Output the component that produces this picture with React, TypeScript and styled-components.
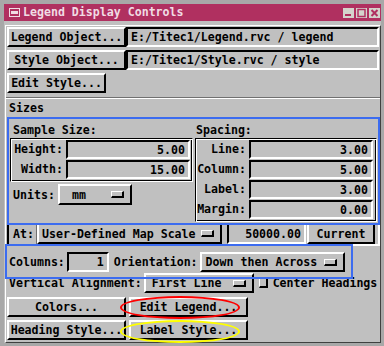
import React from 'react'
import styled, { createGlobalStyle, css } from 'styled-components'

const FONT = `'DejaVu Sans Mono', 'Liberation Mono', monospace`

const GlobalStyle = createGlobalStyle`
  html, body {
    margin: 0;
    padding: 0;
    background: #a8a8a8;
  }
  * { box-sizing: border-box; }
`

const raised = css`
  border-style: solid;
  border-width: 2px;
  border-color: #fff #000 #000 #fff;
`
const sunken = css`
  border-style: solid;
  border-width: 2px;
  border-color: #000 #fff #fff #000;
`
const groove = css`
  border: 1px solid;
  border-color: #000 #fff #fff #000;
  box-shadow: inset 1px 1px 0 #fff, inset -1px -1px 0 #000;
`

const Window = styled.div`
  width: 384px;
  height: 346px;
  background: #a8a8a8;
  padding: 4px 3px 3px 4px;
  display: flex;
  flex-direction: column;
  font: bold 11.6px ${FONT};
  color: #000;
  overflow: hidden;
`

const TitleBar = styled.div`
  height: 17px;
  background: #b03060;
  display: flex;
  align-items: center;
  padding-left: 5px;
  padding-right: 1px;
  color: #f0dce4;
`
const Title = styled.div`
  margin-left: 3px;
  flex: 1;
  white-space: pre;
  line-height: 17px;
`
const WinButtons = styled.div`
  display: flex;
  gap: 2px;
`

const Body = styled.div`
  flex: 1;
  background: #c0c0c0;
  padding: 4px 0 0 1px;
  display: flex;
`
const Panel = styled.div`
  flex: 1;
  border-style: solid;
  border-width: 1px;
  border-color: #fff #404040 #404040 #fff;
  padding: 0 0 0 1px;
  display: flex;
  flex-direction: column;
`

const Row = styled.div<{ $mt?: number }>`
  display: flex;
  height: 20px;
  margin-top: ${p => p.$mt ?? 3}px;
  margin-right: 1px;
  white-space: pre;
`

const PushButton = styled.div<{ $w: number; $ml?: number }>`
  ${raised};
  width: ${p => p.$w}px;
  margin-left: ${p => p.$ml ?? 0}px;
  height: 100%;
  flex: none;
  display: flex;
  align-items: center;
  justify-content: center;
  background: #c0c0c0;
  white-space: pre;
`

const TextField = styled.div<{ $w?: number; $ml?: number; $right?: boolean }>`
  ${sunken};
  ${p => (p.$w ? `width: ${p.$w}px; flex: none;` : 'flex: 1;')}
  margin-left: ${p => p.$ml ?? 0}px;
  height: 100%;
  display: flex;
  align-items: center;
  justify-content: ${p => (p.$right ? 'flex-end' : 'flex-start')};
  padding: 0 3px;
  white-space: pre;
  overflow: hidden;
`

const OptionButton = styled.div<{ $w: number; $pl?: number; $ml?: number }>`
  ${raised};
  width: ${p => p.$w}px;
  height: 100%;
  margin-left: ${p => p.$ml ?? 0}px;
  flex: none;
  display: flex;
  align-items: center;
  padding-left: ${p => p.$pl ?? 4}px;
  padding-right: 6px;
  white-space: pre;
`
const OptionText = styled.span`
  flex: 1;
`
const Indicator = styled.span`
  width: 13px;
  height: 7px;
  border-style: solid;
  border-width: 1px 2px 2px 1px;
  border-color: #fff #000 #000 #fff;
  flex: none;
`

const Separator = styled.div`
  height: 2px;
  margin: 4px 0 0 -1px;
  border-top: 1px solid #707070;
  border-bottom: 1px solid #fff;
`

const SectionLabel = styled.div`
  height: 18px;
  line-height: 18px;
  padding-left: 2px;
`

const SizesFrame = styled.div`
  position: relative;
  width: 373px;
  height: 129px;
  border: 2px solid;
  border-color: #000 #fff #fff #000;
  display: flex;
  flex-direction: column;
`

const SizesGrid = styled.div`
  height: 104px;
  display: grid;
  grid-template-columns: 185px 184px;
`
const Col = styled.div`
  display: flex;
  flex-direction: column;
`
const ColHeading = styled.div<{ $pl: number }>`
  height: 19px;
  padding: 4px 0 0 ${p => p.$pl}px;
  line-height: 14px;
`
const GroupFrame = styled.div<{ $w: number; $pr: number }>`
  ${groove};
  margin-left: 1px;
  width: ${p => p.$w}px;
  padding: 1px ${p => p.$pr}px 1px 1px;
  display: flex;
  flex-direction: column;
`
const FormRow = styled.div`
  display: grid;
  grid-template-columns: 1fr 124px;
  height: 20px;
`
const FormLabel = styled.div`
  text-align: right;
  padding-right: 3px;
  line-height: 19px;
  white-space: pre;
`
const ValueField = styled(TextField)`
  height: 19px;
`

const UnitsRow = styled.div`
  display: flex;
  height: 21px;
  margin-top: 2px;
  padding-left: 4px;
`
const InlineLabel = styled.div<{ $w?: number; $ml?: number }>`
  ${p => (p.$w ? `width: ${p.$w}px;` : '')}
  margin-left: ${p => p.$ml ?? 0}px;
  flex: none;
  display: flex;
  align-items: center;
  white-space: pre;
`

const AtRow = styled.div`
  display: flex;
  height: 21px;
  padding-left: 4px;
`
const AtLabel = styled(InlineLabel)`
  border-right: 1px solid #707070;
  margin-right: 0;
`

const ColumnsRow = styled.div`
  position: relative;
  display: flex;
  height: 27px;
  padding: 6px 0 1px 2px;
  white-space: pre;
`

const AlignRow = styled.div`
  display: flex;
  height: 20px;
  padding-left: 2px;
`
const CheckBox = styled.span`
  width: 9px;
  height: 10px;
  margin-left: 5px;
  align-self: center;
  border-style: solid;
  border-width: 1px 2px 2px 1px;
  border-color: #fff #000 #000 #fff;
  flex: none;
`

const ButtonRow = styled.div<{ $mt: number }>`
  display: flex;
  gap: 3px;
  height: 20px;
  margin-top: ${p => p.$mt}px;
`
const Marked = styled.div`
  position: relative;
  height: 100%;
`

// annotation overlays drawn on top of the dialog
const BlueBox = styled.div<{ $t: number; $l: number; $w: number; $h: number }>`
  position: absolute;
  top: ${p => p.$t}px;
  left: ${p => p.$l}px;
  width: ${p => p.$w}px;
  height: ${p => p.$h}px;
  border: 2px solid #3c6cf0;
  pointer-events: none;
  z-index: 2;
`
const Ellipse = styled.div<{ $color: string; $t: number }>`
  position: absolute;
  left: -9px;
  top: ${p => p.$t}px;
  width: 120px;
  height: 23px;
  border: 2px solid ${p => p.$color};
  border-radius: 50%;
  pointer-events: none;
  z-index: 2;
`

const MenuIcon = () => (
  <svg width="11" height="9" viewBox="0 0 11 9">
    <rect x="0.5" y="0.5" width="10" height="8" fill="none" stroke="#f0dce4" />
    <rect x="2" y="3" width="7" height="3" fill="#f0dce4" />
  </svg>
)

const WinBtn = ({ kind }: { kind: 'min' | 'max' | 'close' }) => (
  <svg width="11" height="10" viewBox="0 0 11 10">
    <rect x="0" y="0" width="11" height="10" fill="#d4d4cc" />
    {kind === 'min' && <rect x="2" y="6" width="6" height="2" fill="#b03060" />}
    {kind === 'max' && <rect x="2" y="1.5" width="7" height="7" fill="none" stroke="#b03060" strokeWidth="1.5" />}
    {kind === 'close' && (
      <path d="M2.5 2 L8.5 8 M8.5 2 L2.5 8" stroke="#b03060" strokeWidth="2" />
    )}
  </svg>
)

export default function App() {
  return (
    <>
      <GlobalStyle />
      <Window>
        <TitleBar>
          <MenuIcon />
          <Title>Legend Display Controls</Title>
          <WinButtons>
            <WinBtn kind="min" />
            <WinBtn kind="max" />
            <WinBtn kind="close" />
          </WinButtons>
        </TitleBar>
        <Body>
          <Panel>
            <Row $mt={1}>
              <PushButton $w={119}>Legend Object...</PushButton>
              <TextField>E:/Titec1/Legend.rvc / legend</TextField>
            </Row>
            <Row>
              <PushButton $w={119}>Style Object...</PushButton>
              <TextField>E:/Titec1/Style.rvc / style</TextField>
            </Row>
            <Row>
              <PushButton $w={99}>Edit Style...</PushButton>
            </Row>
            <Separator />
            <SectionLabel>Sizes</SectionLabel>
            <SizesFrame>
              <BlueBox $t={-2} $l={-2} $w={373} $h={108} />
              <SizesGrid>
                <Col>
                  <ColHeading $pl={4}>Sample Size:</ColHeading>
                  <GroupFrame $w={183} $pr={2}>
                    <FormRow>
                      <FormLabel>Height:</FormLabel>
                      <ValueField $right>5.00</ValueField>
                    </FormRow>
                    <FormRow>
                      <FormLabel>Width:</FormLabel>
                      <ValueField $right>15.00</ValueField>
                    </FormRow>
                  </GroupFrame>
                  <UnitsRow>
                    <InlineLabel $w={45}>Units:</InlineLabel>
                    <OptionButton $w={74} $pl={12}>
                      <OptionText>mm</OptionText>
                      <Indicator />
                    </OptionButton>
                  </UnitsRow>
                </Col>
                <Col>
                  <ColHeading $pl={2}>Spacing:</ColHeading>
                  <GroupFrame $w={182} $pr={3}>
                    <FormRow>
                      <FormLabel>Line:</FormLabel>
                      <ValueField $right>3.00</ValueField>
                    </FormRow>
                    <FormRow>
                      <FormLabel>Column:</FormLabel>
                      <ValueField $right>5.00</ValueField>
                    </FormRow>
                    <FormRow>
                      <FormLabel>Label:</FormLabel>
                      <ValueField $right>3.00</ValueField>
                    </FormRow>
                    <FormRow>
                      <FormLabel>Margin:</FormLabel>
                      <ValueField $right>0.00</ValueField>
                    </FormRow>
                  </GroupFrame>
                </Col>
              </SizesGrid>
              <AtRow>
                <AtLabel $w={24}>At:</AtLabel>
                <OptionButton $w={185} $pl={3}>
                  <OptionText>User-Defined Map Scale</OptionText>
                  <Indicator />
                </OptionButton>
                <TextField $w={79} $ml={5} $right>50000.00</TextField>
                <PushButton $w={68} $ml={1}>Current</PushButton>
              </AtRow>
            </SizesFrame>
            <ColumnsRow>
              <BlueBox $t={-2} $l={-2} $w={348} $h={35} />
              <InlineLabel>Columns:</InlineLabel>
              <TextField $w={42} $ml={2} $right>1</TextField>
              <InlineLabel $ml={5}>Orientation:</InlineLabel>
              <OptionButton $w={145} $ml={2}>
                <OptionText>Down then Across</OptionText>
                <Indicator />
              </OptionButton>
            </ColumnsRow>
            <AlignRow>
              <InlineLabel>Vertical Alignment:</InlineLabel>
              <OptionButton $w={110} $ml={2} $pl={6}>
                <OptionText>First Line</OptionText>
                <Indicator />
              </OptionButton>
              <CheckBox />
              <InlineLabel $ml={5}>Center Headings</InlineLabel>
            </AlignRow>
            <ButtonRow $mt={4}>
              <PushButton $w={119}>Colors...</PushButton>
              <Marked>
                <PushButton $w={119}>Edit Legend...</PushButton>
                <Ellipse $color="#ff0000" $t={-1} />
              </Marked>
            </ButtonRow>
            <ButtonRow $mt={3}>
              <PushButton $w={119}>Heading Style...</PushButton>
              <Marked>
                <PushButton $w={119}>Label Style...</PushButton>
                <Ellipse $color="#ffff00" $t={0} />
              </Marked>
            </ButtonRow>
          </Panel>
        </Body>
      </Window>
    </>
  )
}
